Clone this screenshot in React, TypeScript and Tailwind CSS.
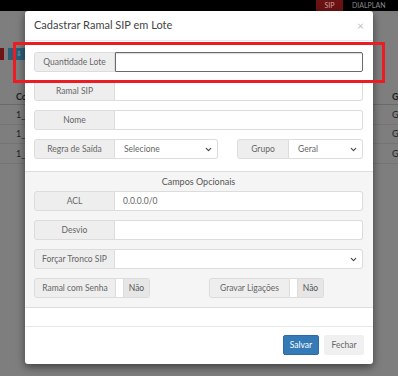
import { ChevronDown } from "lucide-react";

const font = { fontFamily: "Lato, 'Open Sans', sans-serif" };

function Addon({ label, w }: { label: string; w: string }) {
  return (
    <div
      className={`${w} h-full shrink-0 flex items-center justify-center bg-[#eeeeee] border border-[#dcdcdc] rounded-l-[3px] text-[8.5px] text-[#666]`}
    >
      {label}
    </div>
  );
}

function InputRow({ label, value, focus }: { label: string; value?: string; focus?: boolean }) {
  return (
    <div className="flex h-[20px]">
      <Addon label={label} w="w-[81px]" />
      <div
        className={
          focus
            ? "flex-1 h-full bg-white border border-[#6b6b6b] rounded-r-[2px] shadow-[inset_0_1px_1px_rgba(0,0,0,0.15)]"
            : "flex-1 h-full bg-white border border-l-0 border-[#dcdcdc] rounded-r-[3px] flex items-center pl-[8px] text-[8.5px] text-[#666]"
        }
      >
        {value}
      </div>
    </div>
  );
}

function Select({ value, w }: { value?: string; w: string }) {
  return (
    <div
      className={`${w} h-full bg-white border border-l-0 border-[#dcdcdc] rounded-r-[3px] flex items-center justify-between pl-[9px] pr-[4px] text-[8.5px] text-[#666]`}
    >
      <span>{value}</span>
      <ChevronDown size={9} strokeWidth={3} className="text-[#444]" />
    </div>
  );
}

function Toggle({ label, w }: { label: string; w: string }) {
  return (
    <div className="flex h-[20px]">
      <Addon label={label} w={w} />
      <div className="flex h-full border border-l-0 border-[#dcdcdc] rounded-r-[3px] overflow-hidden">
        <div className="w-[7px] bg-white" />
        <div className="w-[26px] bg-[#e6e6e6] border-l border-[#dcdcdc] flex items-center justify-center text-[8.5px] text-[#555]">
          Não
        </div>
      </div>
    </div>
  );
}

export default function App() {
  return (
    <div className="relative w-[398px] h-[376px] overflow-hidden bg-[#7e7e7e]" style={font}>
      {/* background page, dimmed by the overlay */}
      <div className="h-[11px] bg-black flex justify-end text-[7px] leading-[11px]">
        <div className="w-[27px] bg-[#6b1214] text-[#c9a3a3] text-center">SIP</div>
        <div className="w-[55px] pl-[9px] text-[#8a8a8a]">DIALPLAN</div>
      </div>
      <div className="flex gap-[4px] mt-[37px] h-[12px]">
        <div className="w-[4px] bg-[#6e1416]" />
        <div className="w-[30px] bg-[#2a5f78] text-[#9fb8c4] text-[7px] pl-[8px]">⇩</div>
      </div>
      <div className="mt-[30px] text-[9px] text-[#1f1f1f]">
        <div className="flex justify-between h-[15px] border-b border-[#6a6a6a] pl-[16px] font-bold">
          <span>Co</span>
          <span className="w-[6px]">G</span>
        </div>
        {[0, 1, 2].map((i) => (
          <div
            key={i}
            className="flex justify-between items-center h-[19.5px] border-b border-[#747474] pl-[16px]"
          >
            <span>1_</span>
            <span className="w-[6px]">G</span>
          </div>
        ))}
      </div>

      {/* modal */}
      <div className="absolute left-[25px] top-[11px] w-[348px] h-[353px] bg-white rounded-[3px] shadow-[0_3px_9px_rgba(0,0,0,0.5)] flex flex-col">
        <div className="h-[30px] flex items-center justify-between pl-[9px] pr-[9px] border-b border-[#e8e8e8]">
          <span className="text-[11px] text-[#444]">Cadastrar Ramal SIP em Lote</span>
          <span className="text-[12px] text-[#c2c2c2] leading-none">×</span>
        </div>

        <div className="flex flex-col gap-[9px] pt-[11px] pb-[12px] pl-[9px] pr-[10px] border-b border-[#dddddd]">
          <InputRow label="Quantidade Lote" focus />
          <InputRow label="Ramal SIP" />
          <InputRow label="Nome" />
          <div className="flex h-[20px]">
            <Addon label="Regra de Saída" w="w-[81px]" />
            <Select value="Selecione" w="w-[103px]" />
            <div className="w-[19px]" />
            <Addon label="Grupo" w="w-[52px]" />
            <Select value="Geral" w="flex-1" />
          </div>
        </div>

        <div className="bg-[#f5f5f5] border-b border-[#dddddd] pt-[4px] pb-[9px] pl-[9px] pr-[10px]">
          <div className="text-center text-[9px] leading-[12px] text-[#555] mb-[3px]">Campos Opcionais</div>
          <div className="flex flex-col gap-[9px]">
            <InputRow label="ACL" value="0.0.0.0/0" />
            <InputRow label="Desvio" />
            <div className="flex h-[20px]">
              <Addon label="Forçar Tronco SIP" w="w-[81px]" />
              <Select w="flex-1" />
            </div>
            <div className="flex">
              <Toggle label="Ramal com Senha" w="w-[82px]" />
              <div className="w-[59px]" />
              <Toggle label="Gravar Ligações" w="w-[81px]" />
            </div>
          </div>
        </div>

        <div className="h-[18px]" />
        <div className="flex justify-end gap-[5px] pt-[8px] pr-[9px] border-t border-[#e8e8e8]">
          <button className="w-[36px] h-[20px] bg-[#337ab7] border border-[#2e6da4] rounded-[2px] text-white text-[8.5px]">
            Salvar
          </button>
          <button className="w-[40px] h-[20px] bg-[#f0f0f0] rounded-[2px] text-[#666] text-[8.5px]">
            Fechar
          </button>
        </div>
      </div>

      {/* red annotation frame */}
      <div className="absolute left-[13px] top-[42px] w-[372px] h-[41px] border-[3px] border-[#ec1c24]" />
    </div>
  );
}
